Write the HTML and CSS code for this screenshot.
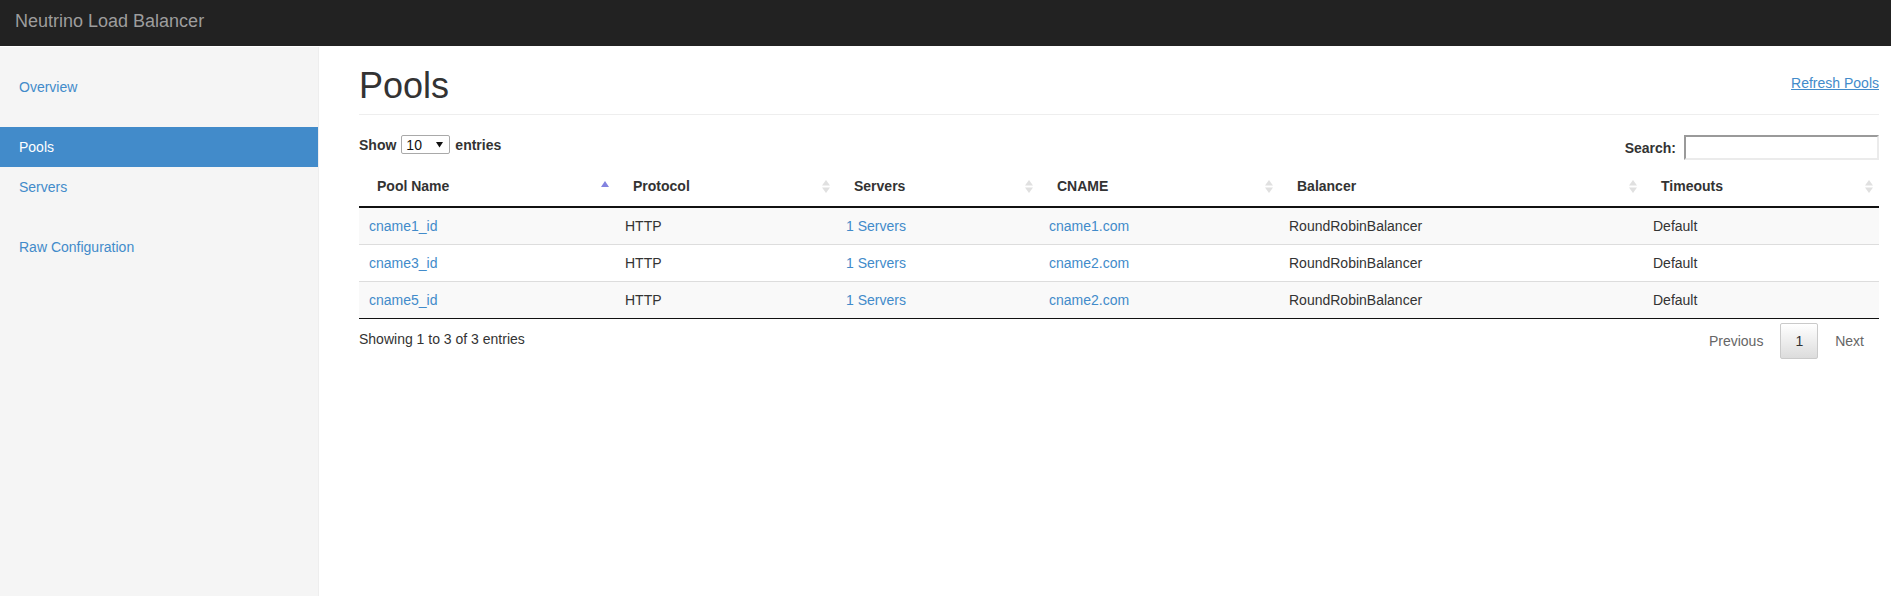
FILE: index.html
```html
<!DOCTYPE html>
<html lang="en">
<head>
<meta charset="utf-8">
<title>Neutrino Load Balancer</title>
<link rel="stylesheet" href="styles.css">
</head>
<body>
<header class="navbar">
  <a class="brand" href="#">Neutrino Load Balancer</a>
</header>
<div class="layout">
  <aside class="sidebar">
    <ul class="nav">
      <li><a href="#">Overview</a></li>
    </ul>
    <ul class="nav">
      <li class="active"><a href="#">Pools</a></li>
      <li><a href="#">Servers</a></li>
    </ul>
    <ul class="nav">
      <li><a href="#">Raw Configuration</a></li>
    </ul>
  </aside>
  <main class="main">
    <div class="page-header">
      <h1>Pools</h1>
      <a class="refresh" href="#">Refresh Pools</a>
    </div>
    <div class="controls">
      <div class="length">
        <span>Show</span>
        <span class="select-box"><span>10</span><svg class="caret" width="7" height="7" viewBox="0 0 7 7"><polygon points="0,1 7,1 3.5,6.5" fill="#111"/></svg></span>
        <span>entries</span>
      </div>
      <label class="filter">
        <span>Search:</span>
        <input type="search" class="search-input">
      </label>
    </div>
    <table class="data">
      <colgroup>
        <col class="c1"><col class="c2"><col class="c3"><col class="c4"><col class="c5"><col class="c6">
      </colgroup>
      <thead>
        <tr>
          <th><div class="th-in"><span>Pool Name</span><svg class="sort" width="8" height="13" viewBox="0 0 8 13"><polygon points="4,1 8,7 0,7" fill="#8383e0"/></svg></div></th>
          <th><div class="th-in"><span>Protocol</span><svg class="sort" width="8" height="13" viewBox="0 0 8 13"><polygon points="4,0 8,5.5 0,5.5" fill="#e0e0e0"/><polygon points="0,7.5 8,7.5 4,13" fill="#e0e0e0"/></svg></div></th>
          <th><div class="th-in"><span>Servers</span><svg class="sort" width="8" height="13" viewBox="0 0 8 13"><polygon points="4,0 8,5.5 0,5.5" fill="#e0e0e0"/><polygon points="0,7.5 8,7.5 4,13" fill="#e0e0e0"/></svg></div></th>
          <th><div class="th-in"><span>CNAME</span><svg class="sort" width="8" height="13" viewBox="0 0 8 13"><polygon points="4,0 8,5.5 0,5.5" fill="#e0e0e0"/><polygon points="0,7.5 8,7.5 4,13" fill="#e0e0e0"/></svg></div></th>
          <th><div class="th-in"><span>Balancer</span><svg class="sort" width="8" height="13" viewBox="0 0 8 13"><polygon points="4,0 8,5.5 0,5.5" fill="#e0e0e0"/><polygon points="0,7.5 8,7.5 4,13" fill="#e0e0e0"/></svg></div></th>
          <th><div class="th-in"><span>Timeouts</span><svg class="sort" width="8" height="13" viewBox="0 0 8 13"><polygon points="4,0 8,5.5 0,5.5" fill="#e0e0e0"/><polygon points="0,7.5 8,7.5 4,13" fill="#e0e0e0"/></svg></div></th>
        </tr>
      </thead>
      <tbody>
        <tr class="odd">
          <td><a href="#">cname1_id</a></td>
          <td>HTTP</td>
          <td><a href="#">1 Servers</a></td>
          <td><a href="#">cname1.com</a></td>
          <td>RoundRobinBalancer</td>
          <td>Default</td>
        </tr>
        <tr class="even">
          <td><a href="#">cname3_id</a></td>
          <td>HTTP</td>
          <td><a href="#">1 Servers</a></td>
          <td><a href="#">cname2.com</a></td>
          <td>RoundRobinBalancer</td>
          <td>Default</td>
        </tr>
        <tr class="odd">
          <td><a href="#">cname5_id</a></td>
          <td>HTTP</td>
          <td><a href="#">1 Servers</a></td>
          <td><a href="#">cname2.com</a></td>
          <td>RoundRobinBalancer</td>
          <td>Default</td>
        </tr>
      </tbody>
    </table>
    <div class="table-footer">
      <div class="info">Showing 1 to 3 of 3 entries</div>
      <div class="paginate">
        <a class="page-btn disabled" href="#">Previous</a>
        <a class="page-btn current" href="#">1</a>
        <a class="page-btn disabled" href="#">Next</a>
      </div>
    </div>
  </main>
</div>
</body>
</html>
```

FILE: styles.css
```css
* { box-sizing: border-box; }

html, body {
  margin: 0;
  padding: 0;
}

body {
  font-family: "Liberation Sans", Arial, sans-serif;
  font-size: 14px;
  line-height: 20px;
  color: #333;
  background: #fff;
}

a {
  color: #428bca;
  text-decoration: none;
}

.navbar {
  height: 46px;
  background: #222;
  padding: 11px 15px 0;
}

.brand {
  font-size: 18px;
  line-height: 20px;
  color: #9d9d9d;
}

.layout {
  display: flex;
  min-height: calc(100vh - 46px);
  padding-top: 1px;
}

.sidebar {
  width: 319px;
  flex: 0 0 319px;
  background: #f5f5f5;
  border-right: 1px solid #eee;
  padding: 20px 0;
}

.nav {
  list-style: none;
  margin: 0 0 20px;
  padding: 0;
}

.nav a {
  display: block;
  padding: 10px 19px;
  line-height: 20px;
}

.nav .active a {
  background: #428bca;
  color: #fff;
}

.main {
  flex: 1;
  padding: 19px 12px 0 40px;
}

.page-header {
  display: flex;
  justify-content: space-between;
  align-items: flex-start;
  border-bottom: 1px solid #eee;
  padding-bottom: 8px;
  margin-bottom: 20px;
}

.page-header h1 {
  margin: 0;
  font-size: 36px;
  line-height: 40px;
  font-weight: 500;
  color: #333;
}

.refresh {
  margin-top: 7px;
  text-decoration: underline;
}

.controls {
  display: flex;
  justify-content: space-between;
  align-items: flex-start;
  margin-bottom: 6px;
  font-weight: bold;
}

.length {
  display: flex;
  align-items: center;
  gap: 5px;
  height: 19px;
}

.select-box {
  display: inline-flex;
  align-items: center;
  justify-content: space-between;
  width: 49px;
  height: 19px;
  border: 1px solid #a9a9a9;
  border-radius: 2px;
  padding: 0 6px 0 4px;
  font-weight: normal;
  color: #111;
  background: #fff;
}

.filter {
  display: flex;
  align-items: center;
  gap: 8px;
  height: 25px;
}

.search-input {
  width: 195px;
  height: 25px;
  border-style: solid;
  border-width: 2px;
  border-color: #9a9a9a #ebebeb #ebebeb #9a9a9a;
  padding: 0 4px;
  font: inherit;
  margin: 0;
}

.data {
  width: 100%;
  border-collapse: collapse;
  table-layout: fixed;
}

.c1 { width: 256px; }
.c2 { width: 221px; }
.c3 { width: 203px; }
.c4 { width: 240px; }
.c5 { width: 364px; }
.c6 { width: 236px; }

.data th {
  text-align: left;
  font-weight: bold;
  padding: 10px 6px 10px 18px;
  border-bottom: 2px solid #111;
}

.th-in {
  display: flex;
  justify-content: space-between;
  align-items: center;
}

.sort {
  display: block;
  flex: 0 0 8px;
}

.data td {
  padding: 8px 10px;
  border-top: 1px solid #ddd;
  white-space: nowrap;
}

.data tbody tr:first-child td {
  border-top: 0;
}

.data tbody tr:last-child td {
  border-bottom: 1px solid #111;
}

.data tr.odd td {
  background: #f9f9f9;
}

.table-footer {
  display: flex;
  justify-content: space-between;
  align-items: flex-start;
}

.info {
  padding-top: 10px;
}

.paginate {
  display: flex;
  padding-top: 4px;
}

.page-btn {
  display: block;
  padding: 7px 14px;
  line-height: 20px;
  margin-left: 2px;
  border: 1px solid transparent;
  border-radius: 2px;
  color: #333;
}

.page-btn.disabled {
  color: #666;
}

.page-btn.current {
  border-color: #cacaca;
  background: linear-gradient(to bottom, #fff 0%, #dcdcdc 100%);
}
```
